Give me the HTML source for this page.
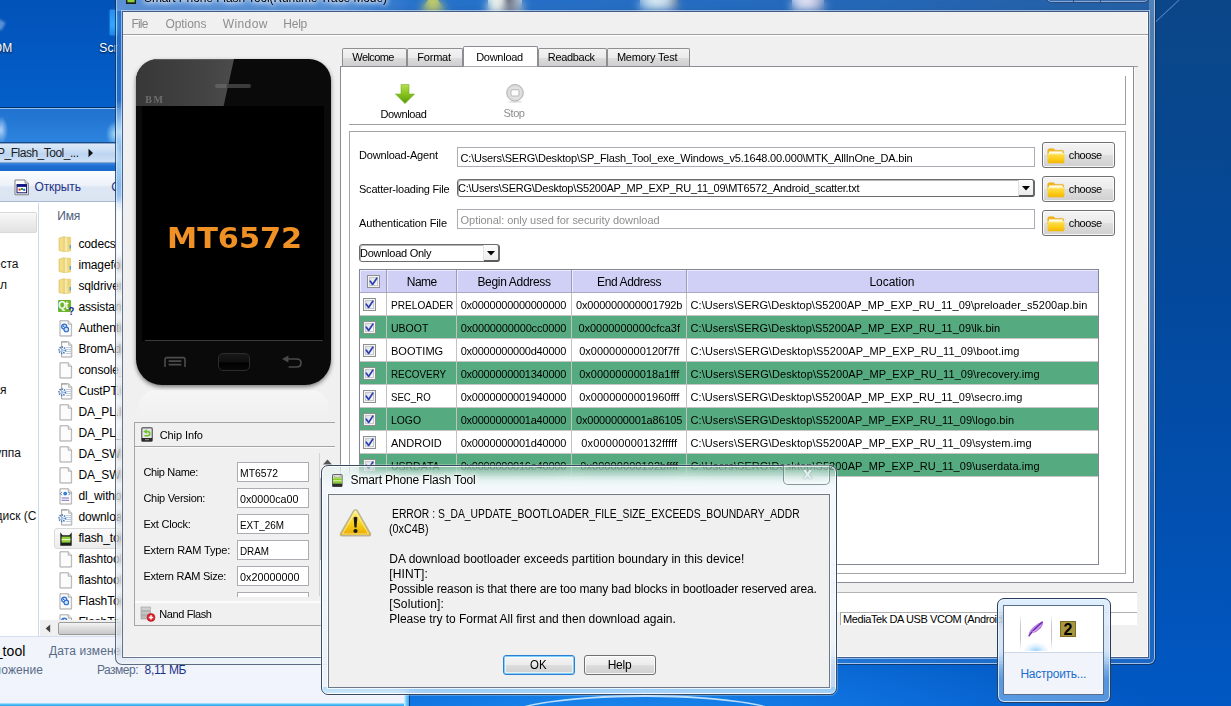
<!DOCTYPE html>
<html lang="ru"><head><meta charset="utf-8"><title>Smart Phone Flash Tool</title>
<style>
*{box-sizing:border-box;margin:0;padding:0}
html,body{width:1231px;height:706px;overflow:hidden;background:#0a4a98}
body{font-family:"Liberation Sans",sans-serif;font-size:12px;position:relative}
#root{position:absolute;left:0;top:0;width:1231px;height:706px;overflow:hidden}
.a{position:absolute}
.t{position:absolute;white-space:pre}
.ic{position:absolute}

#desk{left:0;top:0;width:1231px;height:706px;
 background:
  radial-gradient(ellipse 560px 150px at 610px 745px, rgba(40,160,255,.85) 0%, rgba(25,135,245,.55) 50%, rgba(10,100,220,0) 100%),
  linear-gradient(180deg,#0b4688 0%,#07478f 20%,#03489b 40%,#024fae 70%,#0158c4 100%);}
#deskL{left:0;top:0;width:130px;height:120px;background:linear-gradient(180deg,#0252b8 0%,#035ac4 55%,#0461cc 100%)}
#deskT{left:116px;top:0;width:1040px;height:14px;background:linear-gradient(90deg,#0a58bc 0%,#0d62c6 30%,#0c5ab8 60%,#0b4c98 100%)}
#streak{left:1156px;top:21.4px;width:33px;height:1.4px;background:rgba(120,170,228,.6);transform-origin:left center;transform:rotate(-43deg)}
#arc{left:500px;top:695px;width:290px;height:50px;border-radius:50%;border-top:2.5px solid rgba(215,240,255,.85);filter:blur(.6px)}

#ex{left:-300px;top:107px;width:710px;height:640px;border-radius:7px;border:1px solid #0c2d62;
 background:linear-gradient(180deg,#1e6fd2 0%,#2a7fdc 40%,#2b80dc 100%);box-shadow:inset 0 0 0 1px rgba(180,215,255,.55)}
#exglass{left:0;top:108px;width:116px;height:35px;background:
 radial-gradient(ellipse 7px 14px at 1px 21px, rgba(210,230,255,.8) 0%, rgba(160,200,250,0) 100%),
 radial-gradient(ellipse 9px 13px at 115px 25px, rgba(190,235,255,.85) 0%, rgba(120,200,255,0) 100%),
 linear-gradient(180deg,#2272d0 0%,#2478d4 35%,#2a80da 75%,#2c84de 100%);border-top:1px solid rgba(150,200,250,.9);border-bottom:1px solid #1c4a8a}
#exaddr{left:-40px;top:143px;width:160px;height:20px;border:1px solid #8aa8cc;border-left:none;
 background:linear-gradient(180deg,#dce9f8 0%,#c6dbf4 45%,#bcd4f0 55%,#cfe1f6 100%)}
#exband{left:0;top:163px;width:116px;height:8px;background:linear-gradient(180deg,#3a88e0 0%,#1c6ed0 40%,#1a6ace 100%)}
#extb{left:0;top:171px;width:116px;height:31px;background:linear-gradient(180deg,#fafcfe 0%,#eef3fa 45%,#dde6f3 55%,#dbe4f2 100%);border-bottom:1px solid #a9b9d3}
#excont{left:0;top:202px;width:404px;height:434px;background:#fff}
#exnavdiv{left:38px;top:203px;width:1px;height:433px;background:#c9d9ee}
#exsel{left:-3px;top:212px;width:40px;height:21px;border:1px solid #d9d9d9;border-radius:2px;background:linear-gradient(180deg,#f8f8f8 0%,#e2e2e2 100%)}
#exrowsel{left:54px;top:528px;width:80px;height:21px;border:1px solid #dadada;border-radius:3px;background:linear-gradient(180deg,#fafafa,#ececec)}
#exhs{left:40px;top:620px;width:364px;height:16px;background:#f0f0f0}
#exhsth{left:58px;top:622px;width:200px;height:13px;border:1px solid #9a9a9a;border-radius:2px;background:linear-gradient(180deg,#f4f4f4 0%,#dcdcdc 50%,#c8c8c8 100%)}
#exdet{left:0;top:636px;width:404px;height:67px;background:linear-gradient(180deg,#f1f5fb 0%,#f0f3fb 100%);border-top:1px solid #d5dfef}
#exbot{left:0;top:703px;width:410px;height:3px;background:linear-gradient(180deg,#c8ecff 0%,#5cc4f8 40%,#2aa4ee 100%)}
#exright{left:404px;top:660px;width:6px;height:46px;background:linear-gradient(90deg,#d8f0ff 0%,#7fd0fb 40%,#35a8ee 100%);border-right:1px solid #0f3f80}

#mw{left:115px;top:-24px;width:1041px;height:689px;border-radius:7px;border:1px solid rgba(8,22,52,.62);
 background:rgba(208,222,240,.13);-webkit-backdrop-filter:blur(5px);backdrop-filter:blur(5px);
 box-shadow:inset 0 0 0 1px rgba(235,245,255,.62)}
#mwr{left:1149px;top:0;width:6px;height:520px;background:linear-gradient(180deg,rgba(200,220,245,.28) 0%,rgba(200,220,245,.22) 55%,rgba(200,220,245,0) 100%)}
#mwl{left:116px;top:100px;width:6px;height:106px;background:linear-gradient(180deg,rgba(185,228,255,0) 0%,rgba(185,228,255,.35) 10%,rgba(215,242,255,.8) 30%,rgba(185,228,255,.5) 45%,rgba(200,235,255,.7) 62%,rgba(200,232,255,.55) 80%,rgba(230,244,255,.6) 100%)}
#mwtt{left:117px;top:0;width:300px;height:11px;background:linear-gradient(90deg,rgba(220,235,255,.30) 0%,rgba(220,235,255,.26) 75%,rgba(220,235,255,0) 100%)}
#mwc{left:122px;top:11px;width:1027px;height:647px;background:#f0f0f0;background-clip:padding-box;border:1px solid rgba(10,30,70,.58);box-shadow:0 0 0 1px rgba(235,245,255,.55), inset -1px -1px 0 #fcfcfc}
#mwmenu{left:123px;top:34px;width:1025px;height:1px;background:#a0a0a0}
#mwmenu2{left:123px;top:35px;width:1025px;height:1px;background:#fff}
.tab{position:absolute;top:48px;height:18px;border:1px solid #8e8f8f;border-bottom:none;border-radius:2px 2px 0 0;background:linear-gradient(180deg,#f3f3f3 0%,#ebebeb 50%,#dddddd 50%,#cfcfcf 100%)}
.tab.sel{top:46px;height:21px;background:#fff;border-color:#898c95;border-bottom:1px solid #a9acb3;z-index:2}
#pane{left:340px;top:66px;width:794px;height:517px;background:#fff;border:1px solid #898c95;box-shadow:1px 0 0 #f8f8f8}
#tbl{left:349px;top:76px;width:777px;height:49px;border-right:1px solid #a0a0a0;border-bottom:1px solid #a0a0a0}
#grp{left:349px;top:131px;width:777px;height:443px;border:1px solid #a5a5a5}
.inp{position:absolute;border:1px solid #abadb3;background:#fff}
.cmb{position:absolute;border:1px solid #6c6c6c;border-radius:3px;background:#fff;box-shadow:inset 1px 1px 0 #b5b5b5}
.cmbb{position:absolute;background:linear-gradient(180deg,#fdfdfd,#ececec);border-left:1px solid #e0e0e0;border-right:2px solid #6a6a6a;border-bottom:2px solid #5c5c5c;border-radius:0 3px 3px 0}
.btn{position:absolute;border:1px solid #707070;border-radius:3px;background:linear-gradient(180deg,#f4f4f4 0%,#ebebeb 48%,#dedede 52%,#d0d0d0 100%);box-shadow:inset 0 0 0 1px rgba(255,255,255,.8)}
#tb{left:359px;top:269px;width:740px;height:296px;border:1px solid #828790;background:#fff;overflow:hidden}
.hd{position:absolute;top:0;height:23px;background:#d0d0f6;border-right:1px solid #9c9cb8;border-bottom:1px solid #a8a8c4;box-shadow:inset 1px 1px 0 #ececff}
.rw{position:absolute;left:0;width:738px;height:23px;border-bottom:1px solid #c4c4c4}
.rw.g{background:#55aa7f}
.vl{position:absolute;top:23px;width:1px;height:184px;background:#c2c2c2}
.cb{position:absolute;width:13px;height:13px;border:1px solid #8e8f8f;background:linear-gradient(135deg,#d4d8dc 0%,#f4f4f4 70%,#fff 100%);box-shadow:inset 0 0 0 1px #f4f4f4, inset 0 0 0 2px #c4c8cc}
#prog{left:341px;top:592px;width:796px;height:20px;background:#fff;border-top:1px solid #b4b4b4}
#stat{left:341px;top:612px;width:796px;height:13px;background:#fff;border-top:1px solid #b0b0b0}
#phone{left:136px;top:59px;width:195px;height:326px;border-radius:22px 22px 26px 26px;background:#0a0a0a;overflow:hidden;box-shadow:0 2px 4px rgba(0,0,0,.5)}
#phgloss{left:0;top:0;width:110px;height:47px;background:linear-gradient(90deg,#383838 0%,#3d3d3d 30%,#444 65%,#4f4f4f 100%);clip-path:polygon(0 0,98px 0,87.6px 47px,0 47px);border-top:1px solid #5c5c5c}
#phscr{left:6px;top:47px;width:182px;height:235px;background:#000}
#phline{left:9px;top:281px;width:178px;height:1px;background:#3a3a3a}
#refl{left:139px;top:390px;width:189px;height:30px;border-radius:16px 16px 0 0;background:linear-gradient(180deg,rgba(255,255,255,.4) 0%,rgba(255,255,255,.22) 45%,rgba(255,255,255,0) 100%)}
#chip{left:134px;top:422px;width:201px;height:204px;border:1px solid #a5a5a5;border-right:none}
#chipsep{left:135px;top:446px;width:200px;height:1px;background:#a5a5a5}
#chipsep2{left:135px;top:447px;width:200px;height:1px;background:#fbfbfb}
#nandsep{left:135px;top:601px;width:200px;height:1.5px;background:#fcfcfc}
#scr{left:319px;top:453px;width:1px;height:143px;background:#d2d2d2}
#scrth{left:320px;top:478px;width:2px;height:82px;background:#a9a9a9}

#dlg{left:321px;top:465px;width:516px;height:230px;border-radius:7px;border:1px solid #3a4a60;
 background:linear-gradient(180deg,rgba(215,240,240,.10) 0px,rgba(225,244,246,.45) 9px,rgba(240,248,252,.85) 19px,rgba(236,242,250,.8) 100%);-webkit-backdrop-filter:blur(10px);backdrop-filter:blur(10px);
 box-shadow:inset 0 0 0 1px rgba(255,255,255,.85), 0 0 0 1px rgba(255,255,255,.25)}
#dlgt{left:323px;top:478px;width:512px;height:16px;background:linear-gradient(180deg,rgba(246,249,252,0) 0%,rgba(246,249,252,.85) 100%)}
#dlgb{left:323px;top:687px;width:512px;height:6px;background:linear-gradient(180deg,rgba(60,180,255,.35),rgba(60,170,250,.15))}
#dlgc{left:328px;top:494px;width:502px;height:194px;background:#f0f0f0;border:1px solid #6e7886;box-shadow:0 0 0 1px rgba(255,255,255,.8)}
#dlgx{left:783px;top:465px;width:47px;height:20px;border:1px solid rgba(96,116,124,.75);border-top:none;border-radius:0 0 5px 5px;background:linear-gradient(180deg,rgba(255,255,255,.04) 0%,rgba(255,255,255,.22) 100%);box-shadow:inset 0 0 0 1px rgba(255,255,255,.35)}
.dbtn{position:absolute;top:654.5px;height:20px;border:1px solid #707070;border-radius:3px;background:linear-gradient(180deg,#f5f5f5 0%,#ececec 48%,#dddddd 52%,#cfcfcf 100%);box-shadow:inset 0 0 0 1px rgba(255,255,255,.85)}
.dbtn.def{border-color:#2c7fd0;box-shadow:inset 0 0 0 1px #7fd0f8, inset 0 0 0 2px rgba(255,255,255,.6)}
#tray{left:997px;top:598px;width:114px;height:105px;border-radius:7px;border:1px solid #283c5c;
 background:rgba(185,218,250,.46);-webkit-backdrop-filter:blur(5px);backdrop-filter:blur(5px);box-shadow:inset 0 0 0 1px rgba(235,245,255,.8)}
#trayglow{left:999px;top:640px;width:110px;height:40px;background:linear-gradient(180deg,rgba(200,230,255,0),rgba(205,232,255,.55) 50%,rgba(200,230,255,0))}
#trayc{left:1003px;top:605px;width:101px;height:90px;background:#fff;border:1px solid #5b6f8c}
#trayl{left:1004px;top:652px;width:99px;height:42px;background:#f1f5fb;border-top:1px solid #ccd9ea}
#trayh{left:1020px;top:614px;width:32px;height:37px;background:linear-gradient(180deg,rgba(150,150,160,0),rgba(150,150,160,.55) 35%,rgba(150,150,160,.55) 65%,rgba(150,150,160,0)) left/1px 100% no-repeat,linear-gradient(180deg,rgba(150,150,160,0),rgba(150,150,160,.55) 35%,rgba(150,150,160,.55) 65%,rgba(150,150,160,0)) right/1px 100% no-repeat,radial-gradient(ellipse 13px 9px at 50% 100%,rgba(150,205,255,.95) 0%,rgba(190,225,255,.5) 55%,rgba(255,255,255,0) 100%)}
</style></head>
<body><div id="root">
<div class="a" id="desk"></div><div class="a" id="deskL"></div><div class="a" id="deskT"></div><div class="a" id="arc"></div><div class="a" id="streak"></div>
<div class="a" style="left:420px;top:-7px;width:26px;height:19px;background:#c8cc50;clip-path:polygon(50% 0,100% 100%,0 100%)"></div><div class="a" style="left:488px;top:-4px;width:34px;height:18px;background:linear-gradient(90deg,#e8f4e8 0%,#f4f4f0 40%,#40485a 60%,#dfe8f0 100%)"></div><div class="a" style="left:792px;top:-4px;width:32px;height:15px;background:linear-gradient(90deg,#b8c8e8,#e8e4f4 50%,#8a9cc8)"></div><div class="a" style="left:640px;top:-4px;width:38px;height:14px;background:linear-gradient(90deg,#9cc4e8,#dcecf0 40%,#c8dcec 70%,#5a7090)"></div><div class="a" style="left:110px;top:10px;width:8px;height:25px;background:linear-gradient(180deg,#2a8cf0,#30a8ff 60%,#1f86ea);box-shadow:0 0 2px #5ab8ff"></div><div class="a" style="left:-5px;top:20px;width:9px;height:9px;background:rgba(190,215,245,.45);transform:rotate(30deg);filter:blur(1px)"></div><span class="t" style="left:-7.2px;top:40.94px;font-size:12px;line-height:15px;color:#fff;letter-spacing:0.200px;text-shadow:0 1px 2px rgba(0,0,0,.8);">OM</span><span class="t" style="left:99.2px;top:40.94px;font-size:12px;line-height:15px;color:#fff;letter-spacing:0.300px;text-shadow:0 1px 2px rgba(0,0,0,.8);">Scr</span><div class="a" id="ex"></div><div class="a" id="exglass"></div><div class="a" id="exaddr"></div><div class="a" id="exband"></div><div class="a" id="extb"></div>
<span class="t" style="left:-3.0px;top:145.64px;font-size:12px;line-height:15px;color:#1c1c1c;letter-spacing:-0.493px;">P_Flash_Tool_...</span><svg class="ic" style="left:88px;top:148px" width="6" height="10" viewBox="0 0 6 10"><path d="M.5 .8 L5 5 L.5 9.2Z" fill="#111"/></svg><svg class="ic" style="left:14px;top:179px" width="16" height="17" viewBox="0 0 16 17"><path d="M1 1 H11 L14.4 4.2 V15.8 H1 Z" fill="#fbfbfb" stroke="#6f6f6f" stroke-width=".9"/><path d="M11 1 V4.2 H14.4" fill="#ddd" stroke="#777" stroke-width=".7"/>
<rect x="3" y="5.6" width="9.6" height="8.2" fill="#fff" stroke="#10106a" stroke-width="1"/><rect x="3" y="5.6" width="9.6" height="2.3" fill="#10148c"/><rect x="4.6" y="9.6" width="2" height="2" fill="#d82020"/><rect x="7" y="9" width="2" height="2" fill="#20a020"/><rect x="9.2" y="9.8" width="2" height="2" fill="#2050d8"/></svg><span class="t" style="left:34.5px;top:179.64px;font-size:12px;line-height:15px;color:#1e3287;letter-spacing:-0.123px;">Открыть</span><span class="t" style="left:111.2px;top:179.64px;font-size:12px;line-height:15px;color:#1e3287;">С</span><div class="a" id="excont"></div><div class="a" id="exnavdiv"></div><div class="a" id="exsel"></div>
<span class="t" style="left:-6.2px;top:256.74px;font-size:12px;line-height:15px;color:#111;">еста</span><span class="t" style="left:-0.0px;top:277.94px;font-size:12px;line-height:15px;color:#111;">л</span><span class="t" style="left:0.0px;top:382.94px;font-size:12px;line-height:15px;color:#111;">я</span><span class="t" style="left:-4.7px;top:445.94px;font-size:12px;line-height:15px;color:#111;">уппа</span><span class="t" style="left:-4.5px;top:508.94px;font-size:12px;line-height:15px;color:#111;">диск (C</span><span class="t" style="left:57.3px;top:208.64px;font-size:12px;line-height:15px;color:#4c607a;letter-spacing:-0.188px;">Имя</span><div class="a" id="exrowsel"></div>
<svg class="ic" style="left:58px;top:235.5px" width="15" height="17" viewBox="0 0 15 17">
<path d="M1 2.2 L6.3 0.6 L6.3 15.6 L1 14.6 Z" fill="#f3dc86" stroke="#d8bb55" stroke-width=".6"/>
<path d="M6.3 1.2 L12.6 1.2 L12.6 15 L6.3 15.6 Z" fill="#f7e8a8" stroke="#dcc469" stroke-width=".6"/>
<path d="M9 1.2 L12.6 1.2 L12.6 15 L9.6 15.3 Z" fill="#e9cf6a" opacity=".75"/>
<rect x="11.6" y="9" width="1.4" height="3.6" fill="#5aa0e0"/>
</svg><span class="t" style="left:78.4px;top:237.34px;font-size:12px;line-height:15px;color:#000;letter-spacing:-0.120px;">codecs</span><svg class="ic" style="left:58px;top:256.5px" width="15" height="17" viewBox="0 0 15 17">
<path d="M1 2.2 L6.3 0.6 L6.3 15.6 L1 14.6 Z" fill="#f3dc86" stroke="#d8bb55" stroke-width=".6"/>
<path d="M6.3 1.2 L12.6 1.2 L12.6 15 L6.3 15.6 Z" fill="#f7e8a8" stroke="#dcc469" stroke-width=".6"/>
<path d="M9 1.2 L12.6 1.2 L12.6 15 L9.6 15.3 Z" fill="#e9cf6a" opacity=".75"/>
<rect x="11.6" y="9" width="1.4" height="3.6" fill="#5aa0e0"/>
</svg><span class="t" style="left:78.4px;top:258.34px;font-size:12px;line-height:15px;color:#000;letter-spacing:-0.120px;">imageformats</span><svg class="ic" style="left:58px;top:277.5px" width="15" height="17" viewBox="0 0 15 17">
<path d="M1 2.2 L6.3 0.6 L6.3 15.6 L1 14.6 Z" fill="#f3dc86" stroke="#d8bb55" stroke-width=".6"/>
<path d="M6.3 1.2 L12.6 1.2 L12.6 15 L6.3 15.6 Z" fill="#f7e8a8" stroke="#dcc469" stroke-width=".6"/>
<path d="M9 1.2 L12.6 1.2 L12.6 15 L9.6 15.3 Z" fill="#e9cf6a" opacity=".75"/>
<rect x="11.6" y="9" width="1.4" height="3.6" fill="#5aa0e0"/>
</svg><span class="t" style="left:78.4px;top:279.34px;font-size:12px;line-height:15px;color:#000;letter-spacing:-0.120px;">sqldrivers</span><div class="a" style="left:58px;top:299.5px;width:13px;height:12.5px;background:#6ab42c;border-radius:1px"></div><span class="t" style="left:58.3px;top:300.14px;font-size:10px;line-height:12px;color:#fff;letter-spacing:-0.900px;font-weight:700;">Qt</span><span class="t" style="left:68.2px;top:306.14px;font-size:10px;line-height:12px;color:#1a2aa0;font-weight:700;">?</span><span class="t" style="left:78.4px;top:300.34px;font-size:12px;line-height:15px;color:#000;letter-spacing:-0.120px;">assistant</span><svg class="ic" style="left:58px;top:319.5px" width="16" height="17" viewBox="0 0 16 17">
<path d="M2 .8 H10.2 L13.6 4.2 V16 H2 Z" fill="#fcfcfc" stroke="#8f8f8f" stroke-width=".8"/>
<path d="M10.2 .8 V4.2 H13.6" fill="#e4e4e4" stroke="#9a9a9a" stroke-width=".7"/>
<path d="M2.6 15.6 H13.2 V6" stroke="#c9c9c9" stroke-width=".8" fill="none"/><circle cx="6.2" cy="6.6" r="2.5" fill="none" stroke="#2f6fd0" stroke-width="1.3"/><circle cx="8.3" cy="9.4" r="2.3" fill="#cfe0f8" stroke="#2f6fd0" stroke-width="1.1"/><circle cx="5.6" cy="6.2" r=".9" fill="#2f6fd0"/></svg><span class="t" style="left:78.4px;top:321.34px;font-size:12px;line-height:15px;color:#000;letter-spacing:-0.120px;">Authentication</span><svg class="ic" style="left:58px;top:340.5px" width="16" height="17" viewBox="0 0 16 17">
<path d="M3.6 .8 H10.68 L13.76 4.2 V16 H3.6 Z" fill="#fcfcfc" stroke="#8f8f8f" stroke-width=".8"/>
<path d="M10.68 .8 V4.2 H13.76" fill="#e4e4e4" stroke="#9a9a9a" stroke-width=".7"/>
<path d="M4.2 15.6 H13.2 V6" stroke="#c9c9c9" stroke-width=".8" fill="none"/><circle cx="4.2" cy="9.2" r="3.1" fill="none" stroke="#4b78b8" stroke-width="1.8" stroke-dasharray="1.3 1"/><circle cx="4.2" cy="9.2" r="1.5" fill="#9fc0ea"/>
<path d="M8 6.5H13M8 8.5H13M8 10.5H13M8 12.5H13" stroke="#9db4d4" stroke-width=".7"/>
<path d="M3 1.3 q1 -1.3 2 0 q1 -1.3 2 0 q1 -1.3 2 0" stroke="#888" stroke-width=".7" fill="none"/></svg><span class="t" style="left:78.4px;top:342.34px;font-size:12px;line-height:15px;color:#000;letter-spacing:-0.120px;">BromAdapter</span><svg class="ic" style="left:58px;top:361.5px" width="16" height="17" viewBox="0 0 16 17">
<path d="M2 .8 H10.2 L13.6 4.2 V16 H2 Z" fill="#fcfcfc" stroke="#8f8f8f" stroke-width=".8"/>
<path d="M10.2 .8 V4.2 H13.6" fill="#e4e4e4" stroke="#9a9a9a" stroke-width=".7"/>
<path d="M2.6 15.6 H13.2 V6" stroke="#c9c9c9" stroke-width=".8" fill="none"/></svg><span class="t" style="left:78.4px;top:363.34px;font-size:12px;line-height:15px;color:#000;letter-spacing:-0.120px;">console_mode</span><svg class="ic" style="left:58px;top:382.5px" width="16" height="17" viewBox="0 0 16 17">
<path d="M3.6 .8 H10.68 L13.76 4.2 V16 H3.6 Z" fill="#fcfcfc" stroke="#8f8f8f" stroke-width=".8"/>
<path d="M10.68 .8 V4.2 H13.76" fill="#e4e4e4" stroke="#9a9a9a" stroke-width=".7"/>
<path d="M4.2 15.6 H13.2 V6" stroke="#c9c9c9" stroke-width=".8" fill="none"/><circle cx="4.2" cy="9.2" r="3.1" fill="none" stroke="#4b78b8" stroke-width="1.8" stroke-dasharray="1.3 1"/><circle cx="4.2" cy="9.2" r="1.5" fill="#9fc0ea"/>
<path d="M8 6.5H13M8 8.5H13M8 10.5H13M8 12.5H13" stroke="#9db4d4" stroke-width=".7"/>
<path d="M3 1.3 q1 -1.3 2 0 q1 -1.3 2 0 q1 -1.3 2 0" stroke="#888" stroke-width=".7" fill="none"/></svg><span class="t" style="left:78.4px;top:384.34px;font-size:12px;line-height:15px;color:#000;letter-spacing:-0.120px;">CustPT.ini</span><svg class="ic" style="left:58px;top:403.5px" width="16" height="17" viewBox="0 0 16 17">
<path d="M2 .8 H10.2 L13.6 4.2 V16 H2 Z" fill="#fcfcfc" stroke="#8f8f8f" stroke-width=".8"/>
<path d="M10.2 .8 V4.2 H13.6" fill="#e4e4e4" stroke="#9a9a9a" stroke-width=".7"/>
<path d="M2.6 15.6 H13.2 V6" stroke="#c9c9c9" stroke-width=".8" fill="none"/></svg><span class="t" style="left:78.4px;top:405.34px;font-size:12px;line-height:15px;color:#000;letter-spacing:-0.120px;">DA_PL.bin</span><svg class="ic" style="left:58px;top:424.5px" width="16" height="17" viewBox="0 0 16 17">
<path d="M2 .8 H10.2 L13.6 4.2 V16 H2 Z" fill="#fcfcfc" stroke="#8f8f8f" stroke-width=".8"/>
<path d="M10.2 .8 V4.2 H13.6" fill="#e4e4e4" stroke="#9a9a9a" stroke-width=".7"/>
<path d="M2.6 15.6 H13.2 V6" stroke="#c9c9c9" stroke-width=".8" fill="none"/></svg><span class="t" style="left:78.4px;top:426.34px;font-size:12px;line-height:15px;color:#000;letter-spacing:-0.120px;">DA_PL_CRYPTO</span><svg class="ic" style="left:58px;top:445.5px" width="16" height="17" viewBox="0 0 16 17">
<path d="M2 .8 H10.2 L13.6 4.2 V16 H2 Z" fill="#fcfcfc" stroke="#8f8f8f" stroke-width=".8"/>
<path d="M10.2 .8 V4.2 H13.6" fill="#e4e4e4" stroke="#9a9a9a" stroke-width=".7"/>
<path d="M2.6 15.6 H13.2 V6" stroke="#c9c9c9" stroke-width=".8" fill="none"/></svg><span class="t" style="left:78.4px;top:447.34px;font-size:12px;line-height:15px;color:#000;letter-spacing:-0.120px;">DA_SWSEC.bin</span><svg class="ic" style="left:58px;top:466.5px" width="16" height="17" viewBox="0 0 16 17">
<path d="M2 .8 H10.2 L13.6 4.2 V16 H2 Z" fill="#fcfcfc" stroke="#8f8f8f" stroke-width=".8"/>
<path d="M10.2 .8 V4.2 H13.6" fill="#e4e4e4" stroke="#9a9a9a" stroke-width=".7"/>
<path d="M2.6 15.6 H13.2 V6" stroke="#c9c9c9" stroke-width=".8" fill="none"/></svg><span class="t" style="left:78.4px;top:468.34px;font-size:12px;line-height:15px;color:#000;letter-spacing:-0.120px;">DA_SWSEC_CRYPTO</span><svg class="ic" style="left:58px;top:487.5px" width="16" height="17" viewBox="0 0 16 17">
<path d="M2 .8 H10.2 L13.6 4.2 V16 H2 Z" fill="#fcfcfc" stroke="#8f8f8f" stroke-width=".8"/>
<path d="M10.2 .8 V4.2 H13.6" fill="#e4e4e4" stroke="#9a9a9a" stroke-width=".7"/>
<path d="M2.6 15.6 H13.2 V6" stroke="#c9c9c9" stroke-width=".8" fill="none"/><circle cx="7.2" cy="5.6" r="1.9" fill="#2a7fd8"/><path d="M3.8 4.2 L2.4 5.7 L3.8 7.2 M10.6 4.2 L12 5.7 L10.6 7.2" stroke="#3a5fae" stroke-width=".9" fill="none"/>
<path d="M3.5 10H11M3.5 12.3H11" stroke="#7d6fc0" stroke-width="1"/></svg><span class="t" style="left:78.4px;top:489.34px;font-size:12px;line-height:15px;color:#000;letter-spacing:-0.120px;">dl_without_scatter</span><svg class="ic" style="left:58px;top:508.5px" width="16" height="17" viewBox="0 0 16 17">
<path d="M3.6 .8 H10.68 L13.76 4.2 V16 H3.6 Z" fill="#fcfcfc" stroke="#8f8f8f" stroke-width=".8"/>
<path d="M10.68 .8 V4.2 H13.76" fill="#e4e4e4" stroke="#9a9a9a" stroke-width=".7"/>
<path d="M4.2 15.6 H13.2 V6" stroke="#c9c9c9" stroke-width=".8" fill="none"/><circle cx="4.2" cy="9.2" r="3.1" fill="none" stroke="#4b78b8" stroke-width="1.8" stroke-dasharray="1.3 1"/><circle cx="4.2" cy="9.2" r="1.5" fill="#9fc0ea"/>
<path d="M8 6.5H13M8 8.5H13M8 10.5H13M8 12.5H13" stroke="#9db4d4" stroke-width=".7"/>
<path d="M3 1.3 q1 -1.3 2 0 q1 -1.3 2 0 q1 -1.3 2 0" stroke="#888" stroke-width=".7" fill="none"/></svg><span class="t" style="left:78.4px;top:510.34px;font-size:12px;line-height:15px;color:#000;letter-spacing:-0.120px;">download_scene</span><svg class="ic" style="left:60px;top:531.5px" width="12" height="14" viewBox="0 0 12 14"><path d="M.3 .3 L2.6 3.2 H9.4 L11.7 .3 V13.7 H.3Z" fill="#1d1d1d"/><rect x="1.6" y="4.6" width="8.8" height="6" fill="#8fd23a"/><rect x="1.6" y="7" width="8.8" height="1.2" fill="#e8f6c8"/></svg><span class="t" style="left:78.4px;top:531.34px;font-size:12px;line-height:15px;color:#000;letter-spacing:-0.120px;">flash_tool</span><svg class="ic" style="left:58px;top:550.5px" width="16" height="17" viewBox="0 0 16 17">
<path d="M2 .8 H10.2 L13.6 4.2 V16 H2 Z" fill="#fcfcfc" stroke="#8f8f8f" stroke-width=".8"/>
<path d="M10.2 .8 V4.2 H13.6" fill="#e4e4e4" stroke="#9a9a9a" stroke-width=".7"/>
<path d="M2.6 15.6 H13.2 V6" stroke="#c9c9c9" stroke-width=".8" fill="none"/></svg><span class="t" style="left:78.4px;top:552.34px;font-size:12px;line-height:15px;color:#000;letter-spacing:-0.120px;">flashtool.qch</span><svg class="ic" style="left:58px;top:571.5px" width="16" height="17" viewBox="0 0 16 17">
<path d="M2 .8 H10.2 L13.6 4.2 V16 H2 Z" fill="#fcfcfc" stroke="#8f8f8f" stroke-width=".8"/>
<path d="M10.2 .8 V4.2 H13.6" fill="#e4e4e4" stroke="#9a9a9a" stroke-width=".7"/>
<path d="M2.6 15.6 H13.2 V6" stroke="#c9c9c9" stroke-width=".8" fill="none"/></svg><span class="t" style="left:78.4px;top:573.34px;font-size:12px;line-height:15px;color:#000;letter-spacing:-0.120px;">flashtool.qhc</span><svg class="ic" style="left:58px;top:592.5px" width="16" height="17" viewBox="0 0 16 17">
<path d="M2 .8 H10.2 L13.6 4.2 V16 H2 Z" fill="#fcfcfc" stroke="#8f8f8f" stroke-width=".8"/>
<path d="M10.2 .8 V4.2 H13.6" fill="#e4e4e4" stroke="#9a9a9a" stroke-width=".7"/>
<path d="M2.6 15.6 H13.2 V6" stroke="#c9c9c9" stroke-width=".8" fill="none"/><circle cx="6.2" cy="6.6" r="2.5" fill="none" stroke="#2f6fd0" stroke-width="1.3"/><circle cx="8.3" cy="9.4" r="2.3" fill="#cfe0f8" stroke="#2f6fd0" stroke-width="1.1"/><circle cx="5.6" cy="6.2" r=".9" fill="#2f6fd0"/></svg><span class="t" style="left:78.4px;top:594.34px;font-size:12px;line-height:15px;color:#000;letter-spacing:-0.120px;">FlashToolLib.dll</span><svg class="ic" style="left:58px;top:613.5px" width="16" height="17" viewBox="0 0 16 17">
<path d="M2 .8 H10.2 L13.6 4.2 V16 H2 Z" fill="#fcfcfc" stroke="#8f8f8f" stroke-width=".8"/>
<path d="M10.2 .8 V4.2 H13.6" fill="#e4e4e4" stroke="#9a9a9a" stroke-width=".7"/>
<path d="M2.6 15.6 H13.2 V6" stroke="#c9c9c9" stroke-width=".8" fill="none"/><circle cx="6.2" cy="6.6" r="2.5" fill="none" stroke="#2f6fd0" stroke-width="1.3"/><circle cx="8.3" cy="9.4" r="2.3" fill="#cfe0f8" stroke="#2f6fd0" stroke-width="1.1"/><circle cx="5.6" cy="6.2" r=".9" fill="#2f6fd0"/></svg><span class="t" style="left:78.4px;top:615.34px;font-size:12px;line-height:15px;color:#000;letter-spacing:-0.120px;">FlashToolLib.v1</span><div class="a" id="exhs"></div><div class="a" id="exhsth"></div><svg class="ic" style="left:45px;top:624px" width="6" height="9" viewBox="0 0 6 9"><path d="M5.2 .4 L.6 4.5 L5.2 8.6Z" fill="#444"/></svg><div class="a" id="exdet"></div>
<span class="t" style="left:-5.3px;top:642.15px;font-size:14px;line-height:18px;color:#000;letter-spacing:0.100px;">_tool</span><span class="t" style="left:49.0px;top:644.14px;font-size:12px;line-height:15px;color:#5a6b86;letter-spacing:0.100px;">Дата изменения:</span><span class="t" style="left:-6.0px;top:662.54px;font-size:12px;line-height:15px;color:#5a6b86;letter-spacing:0.100px;">ложение</span><span class="t" style="left:97.0px;top:662.54px;font-size:12px;line-height:15px;color:#5a6b86;letter-spacing:-0.513px;">Размер:</span><span class="t" style="left:144.5px;top:662.54px;font-size:12px;line-height:15px;color:#1e3287;letter-spacing:-0.279px;">8,11 МБ</span><div class="a" id="exbot"></div><div class="a" id="exright"></div>
<svg width="0" height="0" style="position:absolute"><defs><linearGradient id="gf" x1="0" y1="0" x2="0" y2="1"><stop offset="0" stop-color="#ffe25a"/><stop offset=".5" stop-color="#fdd022"/><stop offset="1" stop-color="#f3b400"/></linearGradient></defs></svg><div class="a" id="mw"></div><div class="a" id="mwr"></div><div class="a" id="mwl"></div><div class="a" id="mwtt"></div><div class="a" id="mwc"></div><div class="a" id="mwmenu"></div><div class="a" id="mwmenu2"></div>
<svg class="ic" style="left:126.3px;top:-10px" width="10" height="14" viewBox="0 0 10 14"><rect x="0" y="0" width="10" height="14" fill="#1c1c1c"/><rect x="1.4" y="2" width="7.2" height="10.3" fill="#8bd43a"/></svg><span class="t" style="left:144.0px;top:-9.26px;font-size:12px;line-height:15px;color:#000;letter-spacing:-0.103px;text-shadow:0 0 6px #fff,0 0 6px #fff,0 0 4px #fff;">Smart Phone Flash Tool(Runtime Trace Mode)</span><div class="a" style="left:1046px;top:-12px;width:103px;height:15px;border:1px solid #2c4a78;border-radius:0 0 5px 5px;background:linear-gradient(180deg,rgba(120,160,215,.5),rgba(70,115,180,.5));box-shadow:inset 0 0 0 1px rgba(200,220,245,.55)"></div><div class="a" style="left:1073px;top:-12px;width:1px;height:15px;background:#2c4a78"></div><div class="a" style="left:1100px;top:-12px;width:1px;height:15px;background:#2c4a78"></div><span class="t" style="left:131.4px;top:16.84px;font-size:12px;line-height:15px;color:#8e8e8e;letter-spacing:-0.781px;">File</span><span class="t" style="left:165.4px;top:16.84px;font-size:12px;line-height:15px;color:#8e8e8e;letter-spacing:-0.060px;">Options</span><span class="t" style="left:222.8px;top:16.84px;font-size:12px;line-height:15px;color:#8e8e8e;letter-spacing:0.383px;">Window</span><span class="t" style="left:283.3px;top:16.84px;font-size:12px;line-height:15px;color:#8e8e8e;letter-spacing:-0.229px;">Help</span><div class="a" id="phone"><div class="a" id="phgloss"></div><div class="a" id="phscr"></div><div class="a" id="phline"></div><div class="a" style="left:79px;top:25.2px;width:36px;height:4.2px;border-radius:2px;background:linear-gradient(90deg,#5f5f5f 0%,#5f5f5f 30%,#3e3e3e 36%,#3a3a3a 100%)"></div><svg class="ic" style="left:27px;top:297px" width="24" height="13" viewBox="0 0 24 13"><path d="M2 11 V3.4 Q2 1.6 3.8 1.6 H20.2 Q22 1.6 22 3.4 V11" fill="none" stroke="#4c4c4c" stroke-width="1.6"/><path d="M5.6 5.2 H18.4 M5.6 8.6 H18.4" stroke="#4c4c4c" stroke-width="1.7"/></svg><div class="a" style="left:82px;top:294px;width:32px;height:18px;border:1px solid #2c2c2c;border-radius:5px;background:linear-gradient(180deg,#181818 0%,#0e0e0e 52%,#000 54%,#080808 100%)"></div><svg class="ic" style="left:145px;top:295.7px" width="22" height="14" viewBox="0 0 22 14"><path d="M6.5 4 H15.6 Q20 4 20 8 Q20 12 15.6 12 H7.6" fill="none" stroke="#4a4a4a" stroke-width="1.7"/><path d="M1 4 L7.4 .6 V7.4Z" fill="#4a4a4a"/></svg></div>
<span class="t" style="left:145.2px;top:94.42px;font-size:10px;line-height:12px;color:#6e6e6e;letter-spacing:1.691px;font-family:'Liberation Serif', serif;font-weight:700;">BM</span><span class="t" style="left:167.1px;top:219.97px;font-size:29px;line-height:36px;color:#ef9124;font-family:'DejaVu Sans', 'Liberation Sans', sans-serif;font-weight:700;transform:scaleX(1.045);transform-origin:left center;">MT6572</span><div class="a" id="refl"></div>
<div class="a" id="chip"></div><div class="a" id="chipsep"></div><div class="a" id="chipsep2"></div><div class="a" id="scr"></div><div class="a" id="scrth"></div><svg class="ic" style="left:141px;top:427px" width="12" height="15" viewBox="0 0 12 15"><rect x=".7" y=".7" width="10.6" height="13.6" rx="1.4" fill="#e6e6e6" stroke="#6e6e6e" stroke-width="1.4"/><rect x=".9" y="11" width="10.2" height="3.2" fill="#2a2a2a"/><rect x="4" y="12.2" width="4" height="1" fill="#999"/><path d="M3.4 8.8 H6.6 Q8.8 8.8 8.8 6.6 Q8.8 4.6 6.6 4.6 H5.6" fill="none" stroke="#6fc12c" stroke-width="1.6"/><path d="M2.2 4.6 L5.8 2.2 V7Z" fill="#6fc12c"/></svg><span class="t" style="left:159.7px;top:428.19px;font-size:11px;line-height:14px;color:#000;letter-spacing:-0.091px;">Chip Info</span><div class="inp" style="left:237px;top:462px;width:72px;height:20px"></div><span class="t" style="left:143.4px;top:464.79px;font-size:11px;line-height:14px;color:#000;letter-spacing:-0.342px;">Chip Name:</span><span class="t" style="left:240.3px;top:465.59px;font-size:11px;line-height:14px;color:#000;transform:scaleX(0.9415);transform-origin:left center;">MT6572</span><div class="inp" style="left:237px;top:488px;width:72px;height:20px"></div><span class="t" style="left:143.4px;top:490.79px;font-size:11px;line-height:14px;color:#000;letter-spacing:-0.286px;">Chip Version:</span><span class="t" style="left:240.3px;top:491.59px;font-size:11px;line-height:14px;color:#000;transform:scaleX(0.9758);transform-origin:left center;">0x0000ca00</span><div class="inp" style="left:237px;top:514px;width:72px;height:20px"></div><span class="t" style="left:143.4px;top:516.79px;font-size:11px;line-height:14px;color:#000;letter-spacing:-0.224px;">Ext Clock:</span><span class="t" style="left:240.3px;top:517.59px;font-size:11px;line-height:14px;color:#000;transform:scaleX(0.8994);transform-origin:left center;">EXT_26M</span><div class="inp" style="left:237px;top:540px;width:72px;height:20px"></div><span class="t" style="left:143.4px;top:542.79px;font-size:11px;line-height:14px;color:#000;letter-spacing:-0.138px;">Extern RAM Type:</span><span class="t" style="left:240.3px;top:543.59px;font-size:11px;line-height:14px;color:#000;transform:scaleX(0.8953);transform-origin:left center;">DRAM</span><div class="inp" style="left:237px;top:566px;width:72px;height:20px"></div><span class="t" style="left:143.4px;top:568.79px;font-size:11px;line-height:14px;color:#000;letter-spacing:-0.254px;">Extern RAM Size:</span><span class="t" style="left:240.3px;top:569.59px;font-size:11px;line-height:14px;color:#000;transform:scaleX(0.9825);transform-origin:left center;">0x20000000</span><div class="inp" style="left:237px;top:592px;width:72px;height:5px;border-bottom:none"></div><svg class="ic" style="left:323px;top:459px" width="9" height="6" viewBox="0 0 9 6"><path d="M0 5.6 L4.5 .6 L9 5.6Z" fill="#555"/></svg><div class="a" id="nandsep"></div><svg class="ic" style="left:140px;top:606px" width="16" height="16" viewBox="0 0 16 16"><rect x="1" y="1" width="9.5" height="3.6" fill="#cfcfcf" stroke="#9a9a9a" stroke-width=".6"/><rect x="1" y="5.2" width="9.5" height="3.6" fill="#c4c4c4" stroke="#9a9a9a" stroke-width=".6"/><rect x="1" y="9.4" width="9.5" height="3.6" fill="#bababa" stroke="#9a9a9a" stroke-width=".6"/><circle cx="11" cy="11.4" r="4" fill="#e0202a" stroke="#a01018" stroke-width=".5"/><path d="M8.8 11.4 H13.2 M11 9.2 V13.6" stroke="#fff" stroke-width="1.5"/></svg><span class="t" style="left:159.3px;top:606.79px;font-size:11px;line-height:14px;color:#000;letter-spacing:-0.396px;">Nand Flash</span><div class="a" id="pane"></div><div class="a" style="left:1134px;top:66px;width:4px;height:1px;background:#9a9da4"></div>
<div class="tab" style="left:342px;width:64.5px"></div><span class="t" style="left:352.3px;top:50.19px;font-size:11px;line-height:14px;color:#000;letter-spacing:-0.576px;z-index:3;">Welcome</span><div class="tab" style="left:407px;width:56px"></div><span class="t" style="left:417.3px;top:50.19px;font-size:11px;line-height:14px;color:#000;letter-spacing:-0.209px;z-index:3;">Format</span><div class="tab sel" style="left:463px;width:75px"></div><span class="t" style="left:476.2px;top:49.79px;font-size:11px;line-height:14px;color:#000;letter-spacing:-0.275px;z-index:3;">Download</span><div class="tab" style="left:538px;width:68.5px"></div><span class="t" style="left:547.8px;top:50.19px;font-size:11px;line-height:14px;color:#000;letter-spacing:-0.321px;z-index:3;">Readback</span><div class="tab" style="left:606.5px;width:83px"></div><span class="t" style="left:616.9px;top:50.19px;font-size:11px;line-height:14px;color:#000;letter-spacing:-0.207px;z-index:3;">Memory Test</span><div class="a" id="tbl"></div><svg class="ic" style="left:395px;top:84px" width="20" height="20" viewBox="0 0 20 20"><defs><linearGradient id="ga" x1="0" y1="0" x2="0" y2="1"><stop offset="0" stop-color="#b4e04c"/><stop offset=".5" stop-color="#86c21e"/><stop offset="1" stop-color="#5a9a08"/></linearGradient></defs><path d="M6 .5 H14 V10 H19.6 L10 19.6 L.4 10 H6Z" fill="url(#ga)" stroke="#6aa512" stroke-width=".5"/></svg><span class="t" style="left:380.4px;top:107.19px;font-size:11px;line-height:14px;color:#000;letter-spacing:-0.332px;">Download</span><svg class="ic" style="left:505px;top:83px" width="20" height="21" viewBox="0 0 20 21"><ellipse cx="10" cy="18.8" rx="7.4" ry="1.3" fill="#e6e6e6"/><circle cx="10" cy="9.8" r="8.3" fill="#dadada" stroke="#b2b2b2" stroke-width="1"/><circle cx="10" cy="9.8" r="6.4" fill="#e2e2e2"/><rect x="5.9" y="6.6" width="8.2" height="6.6" rx="1.6" fill="#fdfdfd" stroke="#c2c2c2" stroke-width="1.3"/></svg><span class="t" style="left:503.5px;top:106.39px;font-size:11px;line-height:14px;color:#8c8c8c;letter-spacing:-0.380px;">Stop</span><div class="a" id="grp"></div>
<span class="t" style="left:359.0px;top:147.99px;font-size:11px;line-height:14px;color:#000;letter-spacing:-0.180px;">Download-Agent</span><span class="t" style="left:359.0px;top:182.19px;font-size:11px;line-height:14px;color:#000;letter-spacing:-0.215px;">Scatter-loading File</span><span class="t" style="left:359.0px;top:216.19px;font-size:11px;line-height:14px;color:#000;letter-spacing:-0.139px;">Authentication File</span><div class="inp" style="left:457px;top:147px;width:578px;height:20px"></div><span class="t" style="left:460.6px;top:150.79px;font-size:11px;line-height:14px;color:#000;letter-spacing:-0.194px;">C:\Users\SERG\Desktop\SP_Flash_Tool_exe_Windows_v5.1648.00.000\MTK_AllInOne_DA.bin</span><div class="cmb" style="left:457px;top:179px;width:578px;height:18px"></div><div class="cmbb" style="left:1018px;top:180px;width:17px;height:17px"></div><svg class="ic" style="left:1022px;top:186px" width="8" height="5" viewBox="0 0 8 5"><path d="M0 0 H8 L4 4.6Z" fill="#000"/></svg><span class="t" style="left:458.0px;top:181.19px;font-size:11px;line-height:14px;color:#000;letter-spacing:-0.250px;">C:\Users\SERG\Desktop\S5200AP_MP_EXP_RU_11_09\MT6572_Android_scatter.txt</span><div class="inp" style="left:457px;top:209px;width:578px;height:20px"></div><span class="t" style="left:460.6px;top:212.79px;font-size:11px;line-height:14px;color:#8f8f8f;letter-spacing:-0.054px;">Optional: only used for security download</span><div class="btn" style="left:1042px;top:142px;width:73px;height:26px"></div><svg class="ic" style="left:1046.9px;top:147.6px" width="18" height="16" viewBox="0 0 18 16">
<path d="M.8 2.4 Q.8 .8 2.4 .8 H6.6 L8.2 2.4 H15.4 Q16.6 2.4 16.6 3.6 V8 H.8Z" fill="#f2b61c" stroke="#e0a010" stroke-width=".5"/>
<rect x="2" y="3.4" width="13.6" height="2.6" fill="#fdfdf2"/>
<path d="M.6 5.4 H17.4 V13.6 Q17.4 15.2 15.8 15.2 H2.2 Q.6 15.2 .6 13.6Z" fill="url(#gf)"/>
<path d="M.9 5.8 H17.1" stroke="#fff6b8" stroke-width=".8"/></svg><span class="t" style="left:1068.8px;top:147.99px;font-size:11px;line-height:14px;color:#000;letter-spacing:-0.417px;">choose</span><div class="btn" style="left:1042px;top:176px;width:73px;height:26px"></div><svg class="ic" style="left:1046.9px;top:181.6px" width="18" height="16" viewBox="0 0 18 16">
<path d="M.8 2.4 Q.8 .8 2.4 .8 H6.6 L8.2 2.4 H15.4 Q16.6 2.4 16.6 3.6 V8 H.8Z" fill="#f2b61c" stroke="#e0a010" stroke-width=".5"/>
<rect x="2" y="3.4" width="13.6" height="2.6" fill="#fdfdf2"/>
<path d="M.6 5.4 H17.4 V13.6 Q17.4 15.2 15.8 15.2 H2.2 Q.6 15.2 .6 13.6Z" fill="url(#gf)"/>
<path d="M.9 5.8 H17.1" stroke="#fff6b8" stroke-width=".8"/></svg><span class="t" style="left:1068.8px;top:181.99px;font-size:11px;line-height:14px;color:#000;letter-spacing:-0.417px;">choose</span><div class="btn" style="left:1042px;top:210px;width:73px;height:26px"></div><svg class="ic" style="left:1046.9px;top:215.6px" width="18" height="16" viewBox="0 0 18 16">
<path d="M.8 2.4 Q.8 .8 2.4 .8 H6.6 L8.2 2.4 H15.4 Q16.6 2.4 16.6 3.6 V8 H.8Z" fill="#f2b61c" stroke="#e0a010" stroke-width=".5"/>
<rect x="2" y="3.4" width="13.6" height="2.6" fill="#fdfdf2"/>
<path d="M.6 5.4 H17.4 V13.6 Q17.4 15.2 15.8 15.2 H2.2 Q.6 15.2 .6 13.6Z" fill="url(#gf)"/>
<path d="M.9 5.8 H17.1" stroke="#fff6b8" stroke-width=".8"/></svg><span class="t" style="left:1068.8px;top:215.99px;font-size:11px;line-height:14px;color:#000;letter-spacing:-0.417px;">choose</span><div class="cmb" style="left:359px;top:244px;width:141px;height:18px"></div><div class="cmbb" style="left:483px;top:245px;width:17px;height:17px"></div><svg class="ic" style="left:487px;top:250.5px" width="8" height="5" viewBox="0 0 8 5"><path d="M0 0 H8 L4 4.6Z" fill="#000"/></svg><span class="t" style="left:360.0px;top:245.99px;font-size:11px;line-height:14px;color:#000;letter-spacing:-0.258px;">Download Only</span><div class="a" id="tb"><div class="hd" style="left:0px;width:27px"></div><div class="hd" style="left:27px;width:70px"></div><div class="hd" style="left:97px;width:115px"></div><div class="hd" style="left:212px;width:115px"></div><div class="hd" style="left:327px;width:412px"></div><div class="rw" style="top:23px"></div><div class="rw g" style="top:46px"></div><div class="rw" style="top:69px"></div><div class="rw g" style="top:92px"></div><div class="rw" style="top:115px"></div><div class="rw g" style="top:138px"></div><div class="rw" style="top:161px"></div><div class="rw g" style="top:184px"></div><div class="vl" style="left:26px"></div><div class="vl" style="left:96px"></div><div class="vl" style="left:211px"></div><div class="vl" style="left:326px"></div></div>
<div class="cb" style="left:367px;top:275px"></div><svg class="ic" style="left:369px;top:277px" width="9" height="9" viewBox="0 0 9 9"><path d="M1.3 4.2 L3.6 7.4 L7.8 1.2" stroke="#2a3fb0" stroke-width="1.7" fill="none" stroke-linecap="round" stroke-linejoin="round"/></svg><span class="t" style="left:406.8px;top:274.84px;font-size:12px;line-height:15px;color:#000;letter-spacing:-0.539px;">Name</span><span class="t" style="left:477.4px;top:274.84px;font-size:12px;line-height:15px;color:#000;letter-spacing:-0.316px;">Begin Address</span><span class="t" style="left:597.1px;top:274.84px;font-size:12px;line-height:15px;color:#000;letter-spacing:-0.375px;">End Address</span><span class="t" style="left:869.5px;top:274.84px;font-size:12px;line-height:15px;color:#000;letter-spacing:-0.054px;">Location</span><div class="cb" style="left:363px;top:298px"></div><svg class="ic" style="left:365px;top:300px" width="9" height="9" viewBox="0 0 9 9"><path d="M1.3 4.2 L3.6 7.4 L7.8 1.2" stroke="#2a3fb0" stroke-width="1.7" fill="none" stroke-linecap="round" stroke-linejoin="round"/></svg><span class="t" style="left:390.6px;top:297.79px;font-size:11px;line-height:14px;color:#000;transform:scaleX(0.9181);transform-origin:left center;">PRELOADER</span><span class="t" style="left:460.7px;top:297.79px;font-size:11px;line-height:14px;color:#000;letter-spacing:-0.230px;">0x0000000000000000</span><span class="t" style="left:576.1px;top:297.79px;font-size:11px;line-height:14px;color:#000;letter-spacing:-0.189px;">0x000000000001792b</span><span class="t" style="left:690.6px;top:297.79px;font-size:11px;line-height:14px;color:#000;letter-spacing:0.039px;">C:\Users\SERG\Desktop\S5200AP_MP_EXP_RU_11_09\preloader_s5200ap.bin</span><div class="cb" style="left:363px;top:321px"></div><svg class="ic" style="left:365px;top:323px" width="9" height="9" viewBox="0 0 9 9"><path d="M1.3 4.2 L3.6 7.4 L7.8 1.2" stroke="#2a3fb0" stroke-width="1.7" fill="none" stroke-linecap="round" stroke-linejoin="round"/></svg><span class="t" style="left:390.6px;top:320.79px;font-size:11px;line-height:14px;color:#000;transform:scaleX(0.9534);transform-origin:left center;">UBOOT</span><span class="t" style="left:460.7px;top:320.79px;font-size:11px;line-height:14px;color:#000;letter-spacing:-0.157px;">0x0000000000cc0000</span><span class="t" style="left:578.5px;top:320.79px;font-size:11px;line-height:14px;color:#000;letter-spacing:-0.039px;">0x0000000000cfca3f</span><span class="t" style="left:690.6px;top:320.79px;font-size:11px;line-height:14px;color:#000;letter-spacing:0.044px;">C:\Users\SERG\Desktop\S5200AP_MP_EXP_RU_11_09\lk.bin</span><div class="cb" style="left:363px;top:344px"></div><svg class="ic" style="left:365px;top:346px" width="9" height="9" viewBox="0 0 9 9"><path d="M1.3 4.2 L3.6 7.4 L7.8 1.2" stroke="#2a3fb0" stroke-width="1.7" fill="none" stroke-linecap="round" stroke-linejoin="round"/></svg><span class="t" style="left:390.6px;top:343.79px;font-size:11px;line-height:14px;color:#000;transform:scaleX(1.0048);transform-origin:left center;">BOOTIMG</span><span class="t" style="left:460.7px;top:343.79px;font-size:11px;line-height:14px;color:#000;letter-spacing:-0.230px;">0x0000000000d40000</span><span class="t" style="left:579.2px;top:343.79px;font-size:11px;line-height:14px;color:#000;letter-spacing:-0.007px;">0x000000000120f7ff</span><span class="t" style="left:690.6px;top:343.79px;font-size:11px;line-height:14px;color:#000;letter-spacing:0.091px;">C:\Users\SERG\Desktop\S5200AP_MP_EXP_RU_11_09\boot.img</span><div class="cb" style="left:363px;top:367px"></div><svg class="ic" style="left:365px;top:369px" width="9" height="9" viewBox="0 0 9 9"><path d="M1.3 4.2 L3.6 7.4 L7.8 1.2" stroke="#2a3fb0" stroke-width="1.7" fill="none" stroke-linecap="round" stroke-linejoin="round"/></svg><span class="t" style="left:390.6px;top:366.79px;font-size:11px;line-height:14px;color:#000;transform:scaleX(0.8969);transform-origin:left center;">RECOVERY</span><span class="t" style="left:460.7px;top:366.79px;font-size:11px;line-height:14px;color:#000;letter-spacing:-0.230px;">0x0000000001340000</span><span class="t" style="left:579.2px;top:366.79px;font-size:11px;line-height:14px;color:#000;letter-spacing:0.005px;">0x00000000018a1fff</span><span class="t" style="left:690.6px;top:366.79px;font-size:11px;line-height:14px;color:#000;letter-spacing:0.091px;">C:\Users\SERG\Desktop\S5200AP_MP_EXP_RU_11_09\recovery.img</span><div class="cb" style="left:363px;top:390px"></div><svg class="ic" style="left:365px;top:392px" width="9" height="9" viewBox="0 0 9 9"><path d="M1.3 4.2 L3.6 7.4 L7.8 1.2" stroke="#2a3fb0" stroke-width="1.7" fill="none" stroke-linecap="round" stroke-linejoin="round"/></svg><span class="t" style="left:390.6px;top:389.79px;font-size:11px;line-height:14px;color:#000;transform:scaleX(0.8773);transform-origin:left center;">SEC_RO</span><span class="t" style="left:460.7px;top:389.79px;font-size:11px;line-height:14px;color:#000;letter-spacing:-0.230px;">0x0000000001940000</span><span class="t" style="left:579.2px;top:389.79px;font-size:11px;line-height:14px;color:#000;letter-spacing:0.005px;">0x0000000001960fff</span><span class="t" style="left:690.6px;top:389.79px;font-size:11px;line-height:14px;color:#000;letter-spacing:0.044px;">C:\Users\SERG\Desktop\S5200AP_MP_EXP_RU_11_09\secro.img</span><div class="cb" style="left:363px;top:413px"></div><svg class="ic" style="left:365px;top:415px" width="9" height="9" viewBox="0 0 9 9"><path d="M1.3 4.2 L3.6 7.4 L7.8 1.2" stroke="#2a3fb0" stroke-width="1.7" fill="none" stroke-linecap="round" stroke-linejoin="round"/></svg><span class="t" style="left:390.6px;top:412.79px;font-size:11px;line-height:14px;color:#000;transform:scaleX(0.9435);transform-origin:left center;">LOGO</span><span class="t" style="left:460.7px;top:412.79px;font-size:11px;line-height:14px;color:#000;letter-spacing:-0.230px;">0x0000000001a40000</span><span class="t" style="left:576.0px;top:412.79px;font-size:11px;line-height:14px;color:#000;letter-spacing:-0.183px;">0x0000000001a86105</span><span class="t" style="left:690.6px;top:412.79px;font-size:11px;line-height:14px;color:#000;letter-spacing:0.064px;">C:\Users\SERG\Desktop\S5200AP_MP_EXP_RU_11_09\logo.bin</span><div class="cb" style="left:363px;top:436px"></div><svg class="ic" style="left:365px;top:438px" width="9" height="9" viewBox="0 0 9 9"><path d="M1.3 4.2 L3.6 7.4 L7.8 1.2" stroke="#2a3fb0" stroke-width="1.7" fill="none" stroke-linecap="round" stroke-linejoin="round"/></svg><span class="t" style="left:390.6px;top:435.79px;font-size:11px;line-height:14px;color:#000;transform:scaleX(1.0013);transform-origin:left center;">ANDROID</span><span class="t" style="left:460.7px;top:435.79px;font-size:11px;line-height:14px;color:#000;letter-spacing:-0.230px;">0x0000000001d40000</span><span class="t" style="left:581.3px;top:435.79px;font-size:11px;line-height:14px;color:#000;letter-spacing:0.141px;">0x00000000132fffff</span><span class="t" style="left:690.6px;top:435.79px;font-size:11px;line-height:14px;color:#000;letter-spacing:0.066px;">C:\Users\SERG\Desktop\S5200AP_MP_EXP_RU_11_09\system.img</span><div class="cb" style="left:363px;top:459px"></div><svg class="ic" style="left:365px;top:461px" width="9" height="9" viewBox="0 0 9 9"><path d="M1.3 4.2 L3.6 7.4 L7.8 1.2" stroke="#2a3fb0" stroke-width="1.7" fill="none" stroke-linecap="round" stroke-linejoin="round"/></svg><span class="t" style="left:390.6px;top:458.79px;font-size:11px;line-height:14px;color:#000;transform:scaleX(0.9521);transform-origin:left center;">USRDATA</span><span class="t" style="left:460.7px;top:458.79px;font-size:11px;line-height:14px;color:#000;letter-spacing:-0.230px;">0x0000000016e40000</span><span class="t" style="left:580.2px;top:458.79px;font-size:11px;line-height:14px;color:#000;letter-spacing:0.078px;">0x00000000192bffff</span><span class="t" style="left:690.6px;top:458.79px;font-size:11px;line-height:14px;color:#000;letter-spacing:0.066px;">C:\Users\SERG\Desktop\S5200AP_MP_EXP_RU_11_09\userdata.img</span><div class="a" id="prog"></div><div class="a" id="stat"></div><div class="a" style="left:830px;top:612px;width:10px;height:14px;background:#f0f0f0"></div><div class="a" style="left:840px;top:612px;width:1px;height:13px;background:#a8a8a8"></div><span class="t" style="left:843.0px;top:611.79px;font-size:11px;line-height:14px;color:#000;letter-spacing:-0.408px;">MediaTek DA USB VCOM (Android)</span><div class="a" id="dlg"></div><div class="a" id="dlgt"></div><div class="a" id="dlgb"></div><div class="a" id="dlgc"></div><div class="a" id="dlgx"></div>
<svg class="ic" style="left:332px;top:473.6px" width="10.6" height="13.2" viewBox="0 0 11 14" preserveAspectRatio="none"><rect x=".5" y=".5" width="10" height="13" rx=".8" fill="#dcdcdc" stroke="#5a5a5a" stroke-width="1"/><path d="M1.6 1.6 L4 4 H7 L9.4 1.6" stroke="#9a9a9a" stroke-width=".9" fill="none"/><rect x="1" y="4" width="9" height="6.2" fill="#86cc28"/><rect x="1" y="4" width="9" height="1.2" fill="#a8e05a"/><rect x="1" y="6.6" width="9" height="1.1" fill="#dff3b4"/><rect x=".6" y="10.2" width="9.8" height="3.3" fill="#2c2c2c"/></svg><span class="t" style="left:350.5px;top:473.34px;font-size:12px;line-height:15px;color:#000;letter-spacing:-0.127px;text-shadow:0 0 7px #fff,0 0 7px #fff,0 0 5px #fff,0 0 3px #fff;">Smart Phone Flash Tool</span><span class="t" style="left:802.7px;top:465.11px;font-size:15px;line-height:19px;color:#e2efee;font-family:'DejaVu Sans', 'Liberation Sans', sans-serif;font-weight:700;text-shadow:0 0 1px #7f9a98,0 0 1px #8aa;">x</span><svg class="ic" style="left:339px;top:508px" width="33" height="30" viewBox="0 0 33 30"><defs><linearGradient id="gw" x1="0" y1="0" x2="0" y2="1"><stop offset="0" stop-color="#fff27a"/><stop offset=".55" stop-color="#f8cf1a"/><stop offset="1" stop-color="#e9a800"/></linearGradient></defs>
<path d="M16.5 1.6 Q17.6 1.6 18.3 2.8 L31.3 25.4 Q32.3 27.6 29.8 27.8 H3.2 Q.7 27.6 1.7 25.4 L14.7 2.8 Q15.4 1.6 16.5 1.6Z" fill="url(#gw)" stroke="#b9b39a" stroke-width="1.4"/>
<path d="M16.5 3.6 L29.6 26 H3.4Z" fill="none" stroke="#fff8c0" stroke-width=".9" opacity=".8"/>
<path d="M14.6 9.4 Q16.5 8.2 18.4 9.4 L17.5 19.4 H15.5Z" fill="#1a1a1a"/><circle cx="16.5" cy="23" r="2.1" fill="#1a1a1a"/></svg><span class="t" style="left:392.0px;top:507.34px;font-size:12px;line-height:15px;color:#000;transform:scaleX(0.8605);transform-origin:left center;">ERROR : S_DA_UPDATE_BOOTLOADER_FILE_SIZE_EXCEEDS_BOUNDARY_ADDR</span><span class="t" style="left:389.3px;top:522.34px;font-size:12px;line-height:15px;color:#000;transform:scaleX(0.8974);transform-origin:left center;">(0xC4B)</span><span class="t" style="left:389.3px;top:552.34px;font-size:12px;line-height:15px;color:#000;letter-spacing:0.012px;">DA download bootloader exceeds partition boundary in this device!</span><span class="t" style="left:389.3px;top:567.34px;font-size:12px;line-height:15px;color:#000;letter-spacing:0.083px;">[HINT]:</span><span class="t" style="left:389.3px;top:582.34px;font-size:12px;line-height:15px;color:#000;letter-spacing:-0.141px;">Possible reason is that there are too many bad blocks in bootloader reserved area.</span><span class="t" style="left:389.3px;top:597.34px;font-size:12px;line-height:15px;color:#000;letter-spacing:0.113px;">[Solution]:</span><span class="t" style="left:389.3px;top:612.34px;font-size:12px;line-height:15px;color:#000;letter-spacing:-0.019px;">Please try to Format All first and then download again.</span><div class="dbtn def" style="left:502.5px;width:72px"></div><div class="dbtn" style="left:583.5px;width:72.5px"></div><span class="t" style="left:530.2px;top:657.94px;font-size:12px;line-height:15px;color:#000;transform:scaleX(0.9514);transform-origin:left center;">OK</span><span class="t" style="left:607.7px;top:657.94px;font-size:12px;line-height:15px;color:#000;letter-spacing:-0.229px;">Help</span><div class="a" id="tray"></div><div class="a" id="trayglow"></div><div class="a" id="trayc"></div><div class="a" id="trayl"></div><div class="a" id="trayh"></div>
<svg class="ic" style="left:1027px;top:620px" width="18" height="18" viewBox="0 0 18 18"><path d="M1.6 16.2 Q1.6 11.6 6 7.6 Q11 3 15.8 1 Q16.8 4.4 13.4 8.4 Q9.6 12.4 4.2 13.6 Q2.6 14.6 1.6 16.2Z" fill="#b070dc"/><path d="M1.7 16.4 Q6.4 9.4 15.4 1.8" stroke="#5a1fa6" stroke-width="1.1" fill="none"/><path d="M5 12.4 Q10 10.6 14.4 5" stroke="#e6d2f6" stroke-width=".8" fill="none"/><path d="M3.2 11.8 Q6 7.6 12 3.6" stroke="#c89ae6" stroke-width=".7" fill="none"/></svg><div class="a" style="left:1060px;top:621px;width:15.6px;height:16px;background:#a8963e;box-shadow:inset 0 0 0 1px #7c6c26"></div><span class="t" style="left:1063.4px;top:620.46px;font-size:16px;line-height:20px;color:#000;font-weight:700;">2</span><span class="t" style="left:1020.4px;top:667.04px;font-size:12px;line-height:15px;color:#1c6ccc;letter-spacing:-0.240px;">Настроить...</span>
</div></body></html>
